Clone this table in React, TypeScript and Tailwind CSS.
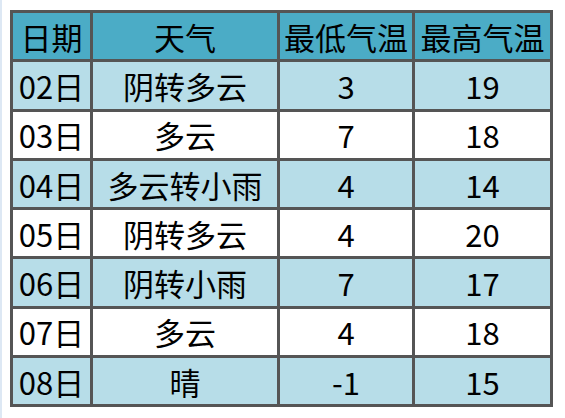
const rows = [
  ['02日', '阴转多云', '3', '19'],
  ['03日', '多云', '7', '18'],
  ['04日', '多云转小雨', '4', '14'],
  ['05日', '阴转多云', '4', '20'],
  ['06日', '阴转小雨', '7', '17'],
  ['07日', '多云', '4', '18'],
  ['08日', '晴', '-1', '15'],
];

const headers = ['日期', '天气', '最低气温', '最高气温'];
const widths = ['w-[80px]', 'w-[187px]', 'w-[135px]', 'w-[138px]'];

export default function App() {
  return (
    <div
      className="flex h-[418px] w-[565px] bg-white"
      style={{ fontFamily: '"Noto Sans CJK SC", "Noto Sans", sans-serif' }}
    >
      <div className="w-[2px] shrink-0 bg-[#dde8f4]" />
      <div className="pl-[8px] pt-[10px]">
        <table className="border-collapse border-[3px] border-[#555555] text-[31px] leading-none text-black">
          <thead>
            <tr className="bg-[#4bacc6]">
              {headers.map((h, i) => (
                <th key={h} className={`${widths[i]} h-[49.3px] p-0 border-[3px] border-[#555555] text-center font-normal`}>
                  {h}
                </th>
              ))}
            </tr>
          </thead>
          <tbody>
            {rows.map((r, ri) => (
              <tr key={r[0]} className={ri % 2 === 0 ? 'bg-[#b7dde8]' : 'bg-white'}>
                {r.map((c, ci) => (
                  <td key={ci} className={`${widths[ci]} h-[49.3px] p-0 border-[3px] border-[#555555] text-center`}>
                    {c}
                  </td>
                ))}
              </tr>
            ))}
          </tbody>
        </table>
      </div>
    </div>
  );
}
